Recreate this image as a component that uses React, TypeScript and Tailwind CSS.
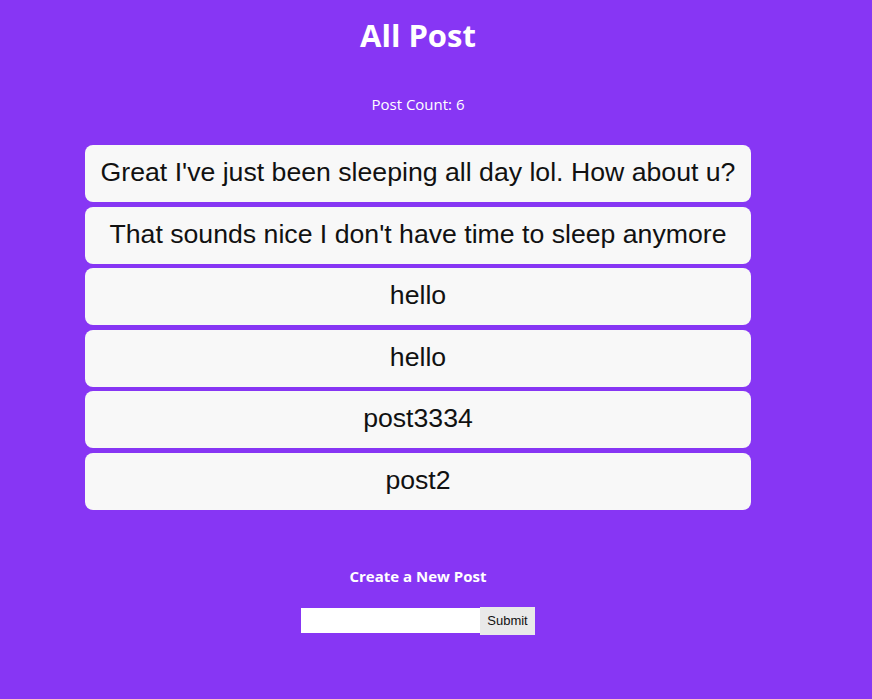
const posts = [
  "Great I've just been sleeping all day lol. How about u?",
  "That sounds nice I don't have time to sleep anymore",
  "hello",
  "hello",
  "post3334",
  "post2",
];

const App = () => {
  return (
    <div className="min-h-[699px] w-full bg-[#8736f4]">
      <div className="w-[836px] flex flex-col items-center text-white font-['Open_Sans','Lato',sans-serif]">
        <h1 className="mt-[16px] text-[31px] leading-[38px] font-bold">All Post</h1>
        <p className="mt-[40px] text-[15px] leading-[20px]">Post Count: {posts.length}</p>

        <div className="mt-[31px] flex flex-col gap-[4.6px] w-fit">
          {posts.map((p, i) => (
            <div
              key={i}
              className="h-[57px] flex items-center justify-center px-4 pb-[3px] rounded-lg bg-[#f8f8f8] text-[#111] text-[26.67px] font-['Liberation_Sans',Arial,sans-serif]"
            >
              {p}
            </div>
          ))}
        </div>

        <h3 className="mt-[56px] text-[15px] leading-[20px] font-bold">Create a New Post</h3>
        <form className="mt-[21px] flex items-center" onSubmit={(e) => e.preventDefault()}>
          <input type="text" className="w-[179px] h-[25px] bg-white text-black outline-none" />
          <button className="h-[28px] px-[7px] bg-[#e9e9e9] text-[#111] text-[13px] font-['Liberation_Sans',Arial,sans-serif]">
            Submit
          </button>
        </form>
      </div>
    </div>
  );
};

export default App;
